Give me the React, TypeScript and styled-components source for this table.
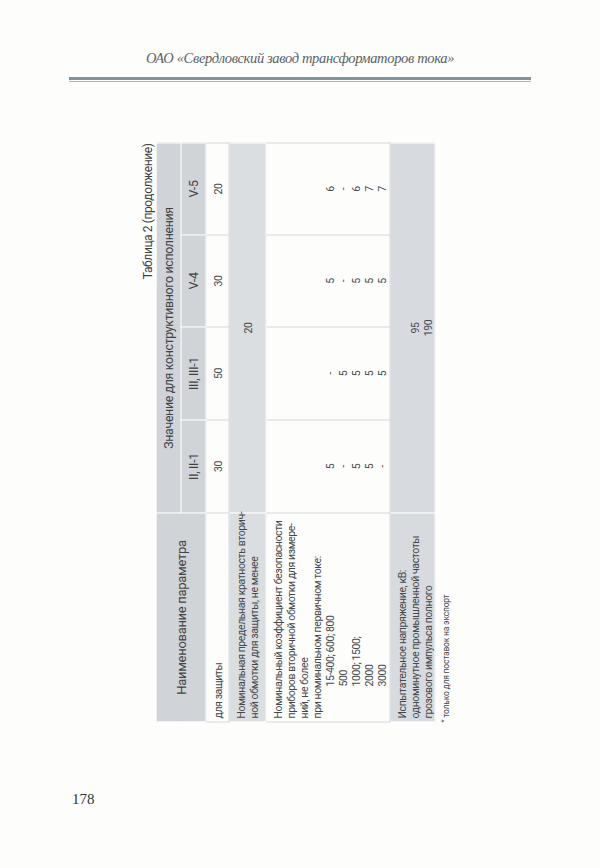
import React from 'react'
import styled, { createGlobalStyle } from 'styled-components'

const GlobalStyle = createGlobalStyle`
    html, body {
        margin: 0;
        padding: 0;
        background: #fdfdfc;
    }
`

const narrow = `Roboto, "Liberation Sans", sans-serif`

type Values = [string, string, string, string]

const protection: Values = ['30', '50', '30', '20']
const safety: Values[] = [
    ['5', '-', '5', '6'],
    ['-', '5', '-', '-'],
    ['5', '5', '5', '6'],
    ['5', '5', '5', '7'],
    ['-', '5', '5', '7'],
]

export default function App(): JSX.Element {
    return (
        <Page>
            <GlobalStyle />
            <RunningHead>ОАО «Свердловский завод трансформаторов тока»</RunningHead>
            <Rule />
            <TurnArea>
                <Turned>
                    <Caption>Таблица 2 (продолжение)</Caption>
                    <Table>
                        <colgroup>
                            <col style={{ width: 209 }} />
                            <col style={{ width: 93 }} />
                            <col style={{ width: 93 }} />
                            <col style={{ width: 92 }} />
                            <col style={{ width: 92 }} />
                        </colgroup>
                        <thead>
                            <tr>
                                <HeadCell rowSpan={2} $big>Наименование параметра</HeadCell>
                                <HeadCell colSpan={4} $h={24}>Значение для конструктивного исполнения</HeadCell>
                            </tr>
                            <tr>
                                <HeadCell $h={24}>II, II-1</HeadCell>
                                <HeadCell>III, III-1</HeadCell>
                                <HeadCell>V-4</HeadCell>
                                <HeadCell>V-5</HeadCell>
                            </tr>
                        </thead>
                        <tbody>
                            <tr>
                                <Cell $h={23}>для защиты</Cell>
                                {protection.map((v, i) => (
                                    <Cell key={i} $center>{v}</Cell>
                                ))}
                            </tr>
                            <tr>
                                <Cell $shade $h={37}>
                                    Номинальная предельная кратность вторич-<br />
                                    ной обмотки для защиты, не менее
                                </Cell>
                                <Cell $shade $center colSpan={4}>20</Cell>
                            </tr>
                            <tr>
                                <Cell $h={124} $top>
                                    Номинальный коэффициент безопасности<br />
                                    приборов вторичной обмотки для измере-<br />
                                    ний, не более<br />
                                    при номинальном первичном токе:
                                    <Indent>15-400; 600; 800</Indent>
                                    <Indent>500</Indent>
                                    <Indent>1000; 1500;</Indent>
                                    <Indent>2000</Indent>
                                    <Indent>3000</Indent>
                                </Cell>
                                {[0, 1, 2, 3].map((c) => (
                                    <Cell key={c} $center $top>
                                        <Stack $skip={4}>
                                            {safety.map((row, r) => (
                                                <div key={r}>{row[c]}</div>
                                            ))}
                                        </Stack>
                                    </Cell>
                                ))}
                            </tr>
                            <tr>
                                <Cell $shade $tint $h={45} $top>
                                    Испытательное напряжение, кВ:<br />
                                    одноминутное промышленной частоты<br />
                                    грозового импульса полного
                                </Cell>
                                <Cell $shade $tint $center $top colSpan={4}>
                                    <Stack $skip={1}>
                                        <div>95</div>
                                        <div>190</div>
                                    </Stack>
                                </Cell>
                            </tr>
                        </tbody>
                    </Table>
                    <Footnote>
                        <sup>*</sup> только для поставок на экспорт
                    </Footnote>
                </Turned>
            </TurnArea>
            <Folio>178</Folio>
        </Page>
    )
}

const Page = styled.div`
    width: 600px;
    height: 868px;
    display: flex;
    flex-direction: column;
    background: #fdfdfc;
    overflow: hidden;
`

const RunningHead = styled.div`
    padding-top: 48px;
    text-align: center;
    font-family: "Liberation Serif", serif;
    font-style: italic;
    font-size: 14.5px;
    letter-spacing: -0.35px;
    line-height: 20px;
    color: #5b6166;
`

const Rule = styled.div`
    margin: 9px auto 0;
    width: 462px;
    height: 1px;
    border-top: 3px solid #84929b;
    border-bottom: 1px solid #a9b3b9;
`

const TurnArea = styled.div`
    width: 310px;
    height: 585px;
    margin: 58px 0 0 140px;
    display: flex;
    align-items: center;
    justify-content: center;
`

const Turned = styled.div`
    flex: none;
    width: 585px;
    height: 310px;
    padding: 0 3px;
    box-sizing: border-box;
    transform: rotate(-90deg);
    display: flex;
    flex-direction: column;
    font-family: ${narrow};
    color: #45484b;
`

const Caption = styled.div`
    height: 15px;
    text-align: right;
    font-size: 12px;
    letter-spacing: -0.4px;
    line-height: 15px;
    color: #3f4245;
`

const Table = styled.table`
    width: 579px;
    table-layout: fixed;
    border-collapse: collapse;
    font-size: 10.5px;
    letter-spacing: -0.4px;
    line-height: 13px;
`

const HeadCell = styled.th<{ $big?: boolean; $h?: number }>`
    background: #d0d3d7;
    border: 1px solid #fdfdfc;
    padding: 0 4px;
    height: ${(p) => (p.$h ? `${p.$h}px` : 'auto')};
    font-weight: normal;
    font-size: ${(p) => (p.$big ? '13px' : '12.3px')};
    letter-spacing: -0.3px;
    color: #404346;
    text-align: center;
    vertical-align: middle;
    white-space: nowrap;
`

const Cell = styled.td<{ $shade?: boolean; $tint?: boolean; $center?: boolean; $top?: boolean; $h?: number }>`
    background: ${(p) => (p.$tint ? '#d7dbdf' : p.$shade ? '#dbdee1' : 'transparent')};
    border: 1px solid ${(p) => (p.$shade ? '#fdfdfc' : '#d4d7da')};
    padding: ${(p) => (p.$top ? '5px 3px 0' : '0 3px')};
    height: ${(p) => (p.$h ? `${p.$h}px` : 'auto')};
    text-align: ${(p) => (p.$center ? 'center' : 'left')};
    vertical-align: ${(p) => (p.$top ? 'top' : 'middle')};
    white-space: nowrap;
    box-sizing: border-box;
`

const Indent = styled.div`
    padding-left: 32px;
`

const Stack = styled.div<{ $skip: number }>`
    padding-top: ${(p) => p.$skip * 13}px;
`

const Footnote = styled.div`
    margin-top: 4px;
    font-size: 8.5px;
    letter-spacing: -0.2px;
    line-height: 12px;
    color: #45484b;

    sup {
        font-size: 7px;
        vertical-align: top;
        line-height: 8px;
    }
`

const Folio = styled.div`
    margin: 65px 0 0 72px;
    font-family: "Liberation Serif", serif;
    font-size: 15px;
    line-height: 18px;
    color: #333;
`
